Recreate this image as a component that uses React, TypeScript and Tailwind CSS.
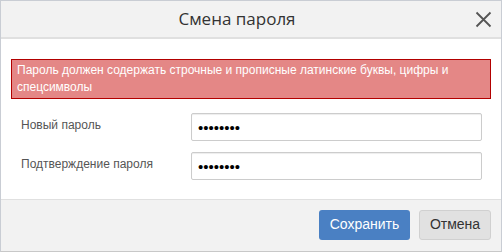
import React from "react";

const App: React.FC = () => {
  return (
    <div className="w-[502px] h-[252px] bg-white border border-[#c9cdd4] border-b-[#c8c8c8] flex flex-col overflow-hidden font-['Liberation_Sans',Arial,sans-serif]">
      <div className="relative h-[38px] shrink-0 bg-[#f2f2f2] border-b-2 border-[#e0e0e0] flex items-center justify-center pr-[28px]">
        <span className="font-['Open_Sans',sans-serif] text-[17px] text-[#333] leading-none -mt-[1px]">Смена пароля</span>
        <button className="absolute right-[9px] top-[9px] w-[18px] h-[18px] flex items-center justify-center">
          <svg width="17" height="17" viewBox="0 0 17 17" fill="none" stroke="#555" strokeWidth="1.8">
            <path d="M1.5 1.5 L15.5 15.5 M15.5 1.5 L1.5 15.5" />
          </svg>
        </button>
      </div>

      <div className="flex-1 px-[10px] pt-[20px]">
        <div className="bg-[#e48786] border border-[#b20000] text-white text-[12px] leading-[17px] px-[5px] pt-[2px] pb-[2px]">
          Пароль должен содержать строчные и прописные латинские буквы, цифры и спецсимволы
        </div>

        <div className="mt-[14px] flex flex-col gap-[11px]">
          <div className="flex items-center">
            <label className="w-[180px] pl-[10px] text-[12px] text-[#555] -mt-[4px]">Новый пароль</label>
            <input
              type="password"
              defaultValue="password"
              className="w-[291px] h-[28px] border border-[#ccc] rounded-[2px] shadow-[inset_0_1px_1px_rgba(0,0,0,0.075)] px-[6px] text-[15px] text-black outline-none"
            />
          </div>
          <div className="flex items-center">
            <label className="w-[180px] pl-[10px] text-[12px] text-[#555] -mt-[4px]">Подтверждение пароля</label>
            <input
              type="password"
              defaultValue="password"
              className="w-[291px] h-[28px] border border-[#ccc] rounded-[2px] shadow-[inset_0_1px_1px_rgba(0,0,0,0.075)] px-[6px] text-[15px] text-black outline-none"
            />
          </div>
        </div>
      </div>

      <div className="h-[52px] shrink-0 bg-[#f2f2f2] border-t border-[#e0e0e0] flex items-center justify-end gap-[9px] pr-[10px] pb-[2px]">
        <button className="w-[91px] h-[30px] rounded-[3px] bg-[#4a80c3] text-white text-[14px]">Сохранить</button>
        <button className="w-[72px] h-[30px] rounded-[3px] bg-[#e1e1e1] border border-[#d0d0d0] text-[#333] text-[14px]">Отмена</button>
      </div>
    </div>
  );
};

export default App;
